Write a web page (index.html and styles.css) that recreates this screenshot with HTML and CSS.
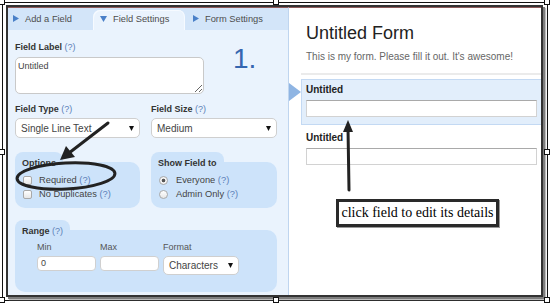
FILE: index.html
```html
<!DOCTYPE html>
<html>
<head>
<meta charset="utf-8">
<link rel="stylesheet" href="styles.css">
</head>
<body>
<div class="sel">
  <div class="shot">
    <div class="left">
      <div class="tabs">
        <div class="tab tab1"><svg class="tri" width="6" height="7" viewBox="0 0 6 7"><polygon points="0,0 6,3.5 0,7"/></svg><span>Add a Field</span></div>
        <div class="tab active"><svg class="tri" width="7" height="6" viewBox="0 0 7 6"><polygon points="0,0 7,0 3.5,6"/></svg><span>Field Settings</span></div>
        <div class="tab tab3"><svg class="tri" width="6" height="7" viewBox="0 0 6 7"><polygon points="0,0 6,3.5 0,7"/></svg><span>Form Settings</span></div>
      </div>
      <div class="lbody">
        <div class="top">
          <div class="labelcol">
            <div class="lbl">Field Label <span class="q">(?)</span></div>
            <textarea class="ta">Untitled</textarea>
          </div>
          <div class="num">1.</div>
        </div>
        <div class="two">
          <div>
            <div class="lbl">Field Type <span class="q">(?)</span></div>
            <div class="select"><span>Single Line Text</span><svg class="caret" width="5" height="5" viewBox="0 0 5 5"><polygon points="0,0 5,0 2.5,5"/></svg></div>
          </div>
          <div>
            <div class="lbl">Field Size <span class="q">(?)</span></div>
            <div class="select"><span>Medium</span><svg class="caret" width="5" height="5" viewBox="0 0 5 5"><polygon points="0,0 5,0 2.5,5"/></svg></div>
          </div>
        </div>
        <div class="two groups">
          <div class="group">
            <div class="gtitle">Options</div>
            <div class="gbody">
              <div class="opt"><span class="cb"></span><span>Required <span class="q">(?)</span></span></div>
              <div class="opt"><span class="cb"></span><span>No Duplicates <span class="q">(?)</span></span></div>
            </div>
          </div>
          <div class="group">
            <div class="gtitle">Show Field to</div>
            <div class="gbody">
              <div class="opt"><span class="rb on"></span><span>Everyone <span class="q">(?)</span></span></div>
              <div class="opt"><span class="rb"></span><span>Admin Only <span class="q">(?)</span></span></div>
            </div>
          </div>
        </div>
        <div class="group range">
          <div class="gtitle">Range <span class="q">(?)</span></div>
          <div class="gbody rbody">
            <div class="rgrid">
              <div><div class="rl">Min</div><div class="in">0</div></div>
              <div><div class="rl">Max</div><div class="in"></div></div>
              <div><div class="rl">Format</div><div class="select small"><span>Characters</span><svg class="caret" width="5" height="5" viewBox="0 0 5 5"><polygon points="0,0 5,0 2.5,5"/></svg></div></div>
            </div>
          </div>
        </div>
      </div>
    </div>
    <div class="right">
      <div class="title">Untitled Form</div>
      <div class="desc">This is my form. Please fill it out. It's awesome!</div>
      <div class="hr"></div>
      <div class="field hl">
        <div class="flbl">Untitled</div>
        <div class="finput"></div>
      </div>
      <div class="field f2">
        <div class="flbl">Untitled</div>
        <div class="finput"></div>
      </div>
    </div>
  </div>
</div>

<div class="h h-tl"></div><div class="h h-tm"></div><div class="h h-tr"></div>
<div class="h h-ml"></div><div class="h h-mr"></div>
<div class="h h-bl"></div><div class="h h-bm"></div><div class="h h-br"></div>

<svg class="notes" width="550" height="304" viewBox="0 0 550 304">
  <g stroke="#222" stroke-width="3" fill="none" stroke-linecap="round">
    <line x1="108" y1="123" x2="69" y2="153"/>
    <ellipse cx="66" cy="176" rx="49" ry="13" transform="rotate(-3 66 176)"/>
    <line x1="349" y1="190" x2="348" y2="128"/>
  </g>
  <g fill="#222">
    <polygon points="60,160 66,146 75,157"/>
    <polygon points="348,120 343,132 353,132"/>
  </g>
</svg>
<div class="callout">click field to edit its details</div>
</body>
</html>
```

FILE: styles.css
```css
* { box-sizing: border-box; }

body {
  margin: 0;
  padding: 2px 0 0 2px;
  width: 550px;
  height: 304px;
  overflow: hidden;
  position: relative;
  background: #fff;
  font-family: "Liberation Sans", Arial, sans-serif;
}

.sel {
  width: 546px;
  height: 299px;
  border: 1px solid #111;
  padding: 2px 0 0 3px;
}

.shot {
  width: 537px;
  height: 292px;
  border: 2px solid #333;
  box-shadow: 2px 2px 0 #7d7d7d, 3px 3px 1px #bdbdbd;
  display: flex;
}

/* LEFT PANEL */
.left {
  width: 281px;
  border-top: 1px solid #8e5a5a;
  border-right: 1px solid #bfd5ef;
  background: #eaf3fd;
  display: flex;
  flex-direction: column;
}

.tabs {
  height: 22px;
  display: flex;
  align-items: flex-end;
  background: #d3e5f9;
}

.tab {
  height: 20px;
  display: flex;
  align-items: center;
  gap: 6px;
  padding-bottom: 3px;
  font-size: 9.3px;
  color: #4d4d4d;
}
.tab .tri { fill: #4a80c8; flex: none; }
.tab1 { width: 85px; padding-left: 5px; }
.active {
  width: 92px;
  padding-left: 7px;
  background: #eaf3fd;
  border-radius: 7px 7px 0 0;
  box-shadow: inset 1px 1px 0 #f6faff, inset -1px 0 0 #f6faff;
}
.tab3 { padding-left: 8px; }

.lbody { padding: 11px 11px 0 7px; }

.lbl {
  font-size: 9px;
  font-weight: bold;
  color: #333;
  line-height: 12px;
}
.q { font-weight: normal; color: #5b80b8; }

.top { display: flex; }
.labelcol { width: 190px; }
.ta {
  display: block;
  width: 189px;
  height: 37px;
  margin: 4px 0 0;
  border: 1px solid #c9c9c9;
  border-radius: 5px;
  padding: 3px 2px;
  font-family: "Liberation Sans", Arial, sans-serif;
  font-size: 9px;
  color: #444;
  background: #fff;
  resize: both;
  outline: none;
}
.num {
  margin: 4px 0 0 28px;
  font-size: 28px;
  line-height: 28px;
  color: #3566b0;
}

.two {
  display: grid;
  grid-template-columns: 125px 126px;
  column-gap: 11px;
  margin-top: 9px;
}

.select {
  margin-top: 3px;
  height: 20px;
  background: #fff;
  border: 1px solid #cfcfcf;
  border-radius: 5px;
  display: flex;
  align-items: center;
  justify-content: space-between;
  padding: 0 5px 0 5px;
  font-size: 10px;
  color: #444;
}
.caret { fill: #111; flex: none; }
.select.small { height: 19px; }

.groups { margin-top: 14px; }

.group {
  display: flex;
  flex-direction: column;
  align-items: flex-start;
}
.gtitle {
  position: relative;
  z-index: 1;
  height: 16px;
  padding: 5px 7px 0;
  background: #cde3fa;
  border-radius: 8px 8px 0 0;
  font-size: 9px;
  font-weight: bold;
  color: #333;
  line-height: 12px;
}
.gbody {
  align-self: stretch;
  margin-top: -6px;
  background: #cde3fa;
  border-radius: 0 10px 10px 10px;
  padding: 11px 0 7px 8px;
}
.opt {
  display: flex;
  align-items: center;
  height: 14px;
  font-size: 9.3px;
  color: #444;
}
.cb, .rb {
  flex: none;
  width: 9px;
  height: 9px;
  margin-right: 7px;
  border: 1px solid #a9a9a9;
  background: linear-gradient(#fff, #e6e6e6);
}
.cb { border-radius: 2px; }
.rb { border-radius: 50%; margin-right: 8px; }
.rb.on { background: radial-gradient(circle, #555 0 1.4px, #f4f4f4 2.2px); }

.range { margin-top: 12px; }
.rbody { padding: 11px 0 17px 22px; }
.rgrid {
  display: grid;
  grid-template-columns: 59px 59px 76px;
  column-gap: 4px;
}
.rl {
  font-size: 9px;
  color: #555;
  line-height: 12px;
}
.in {
  margin-top: 3px;
  height: 15px;
  background: #fff;
  border: 1px solid #d0d0d0;
  border-radius: 4px;
  padding-left: 3px;
  font-size: 9px;
  line-height: 13px;
  color: #444;
}

/* RIGHT PANEL */
.right {
  width: 252px;
  border-top: 1px solid #8e5a5a;
  background: #fff;
  padding: 14px 0 0 12px;
}
.title {
  padding-left: 5px;
  font-size: 18px;
  line-height: 22px;
  color: #222;
}
.desc {
  padding-left: 5px;
  margin-top: 7px;
  font-size: 10px;
  line-height: 12px;
  color: #666;
}
.hr {
  margin-top: 10px;
  height: 2px;
  background: #ebebeb;
}
.field .flbl {
  font-size: 10px;
  font-weight: bold;
  color: #222;
  line-height: 12px;
  margin-bottom: 4px;
}
.finput {
  height: 17px;
  background: #fff;
  border: 1px solid #d2d2d2;
  border-top-color: #a9a9a9;
}
.hl {
  position: relative;
  margin-top: 4px;
  background: #e2eefb;
  border: 1px solid #c3d9f3;
  border-right: none;
  padding: 4px 4px 7px 4px;
}
.hl::before {
  content: "";
  position: absolute;
  left: -13px;
  top: 3px;
  border-left: 12px solid #8fb5e3;
  border-top: 9px solid transparent;
  border-bottom: 9px solid transparent;
}
.f2 { margin-top: 7px; padding: 0 4px 0 5px; }

/* selection handles */
.h {
  position: absolute;
  width: 6px;
  height: 6px;
  background: #fff;
  border: 1px solid #111;
}
.h-tl { left: -1px; top: -1px; }
.h-tm { left: 273px; top: -1px; }
.h-tr { left: 544px; top: -1px; }
.h-ml { left: -1px; top: 149px; }
.h-mr { left: 544px; top: 149px; }
.h-bl { left: -1px; top: 297px; }
.h-bm { left: 273px; top: 297px; }
.h-br { left: 544px; top: 297px; }

/* annotations */
.notes {
  position: absolute;
  left: 0;
  top: 0;
  pointer-events: none;
  z-index: 2;
}
.callout {
  position: absolute;
  left: 336px;
  top: 199px;
  width: 163px;
  height: 28px;
  border: 3px solid #2a2a2a;
  box-shadow: 1px 1px 0 #999;
  background: #fff;
  font-family: "Liberation Serif", "Times New Roman", serif;
  font-size: 14px;
  line-height: 22px;
  text-align: center;
  color: #000;
}
```
